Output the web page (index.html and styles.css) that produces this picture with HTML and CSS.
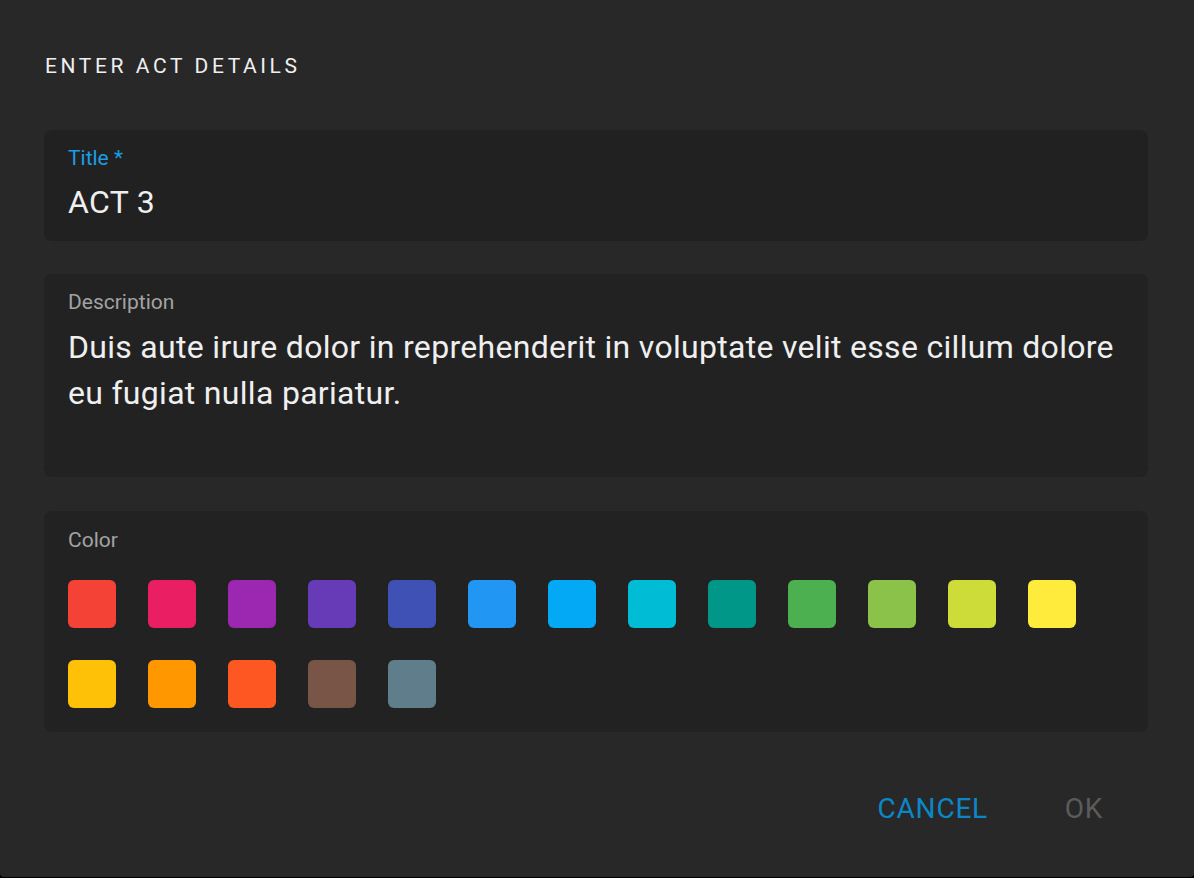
FILE: index.html
```html
<!DOCTYPE html>
<html lang="en">
<head>
<meta charset="utf-8">
<title>Enter act details</title>
<link rel="stylesheet" href="styles.css">
</head>
<body>
<div class="dialog">
  <h2 class="dialog-title">ENTER ACT DETAILS</h2>
  <div class="field field-focused">
    <label class="field-label label-active">Title *</label>
    <div class="field-value">ACT 3</div>
  </div>
  <div class="field field-description">
    <label class="field-label">Description</label>
    <div class="field-value field-multiline">Duis aute irure dolor in reprehenderit in voluptate velit esse cillum dolore eu fugiat nulla pariatur.</div>
  </div>
  <div class="field field-colors">
    <label class="field-label">Color</label>
    <div class="swatches">
      <span class="swatch" style="background:#f44336"></span>
      <span class="swatch" style="background:#e91e63"></span>
      <span class="swatch" style="background:#9c27b0"></span>
      <span class="swatch" style="background:#673ab7"></span>
      <span class="swatch" style="background:#3f51b5"></span>
      <span class="swatch" style="background:#2196f3"></span>
      <span class="swatch" style="background:#03a9f4"></span>
      <span class="swatch" style="background:#00bcd4"></span>
      <span class="swatch" style="background:#009688"></span>
      <span class="swatch" style="background:#4caf50"></span>
      <span class="swatch" style="background:#8bc34a"></span>
      <span class="swatch" style="background:#cddc39"></span>
      <span class="swatch" style="background:#ffeb3b"></span>
      <span class="swatch" style="background:#ffc107"></span>
      <span class="swatch" style="background:#ff9800"></span>
      <span class="swatch" style="background:#ff5722"></span>
      <span class="swatch" style="background:#795548"></span>
      <span class="swatch" style="background:#607d8b"></span>
    </div>
  </div>
  <div class="actions">
    <button class="btn btn-cancel">CANCEL</button>
    <button class="btn btn-ok">OK</button>
  </div>
</div>
</body>
</html>
```

FILE: styles.css
```css
html, body {
  margin: 0;
  padding: 0;
  background: #000;
}

body {
  font-family: Roboto, "Liberation Sans", sans-serif;
}

.dialog {
  box-sizing: border-box;
  width: 1194px;
  height: 877px;
  background: #282828;
  border-radius: 0 0 4px 4px;
  padding: 54px 46px 0 44px;
  display: flex;
  flex-direction: column;
}

.dialog-title {
  margin: 0 0 52px 1px;
  font-size: 21px;
  line-height: 24px;
  font-weight: 400;
  letter-spacing: 3.6px;
  color: #efefef;
}

.field {
  background: #222222;
  border-radius: 8px;
  padding: 16px 24px 16px 24px;
  margin-bottom: 33px;
  display: flex;
  flex-direction: column;
}

.field-focused {
  background: #212121;
}

.field-description {
  padding-bottom: 15px;
  margin-bottom: 34px;
}

.field-label {
  font-size: 21px;
  line-height: 24px;
  color: #a3a3a3;
}

.label-active {
  color: #1b9de2;
}

.field-value {
  margin-top: 9px;
  font-size: 32px;
  line-height: 46px;
  letter-spacing: 0.3px;
  color: #efefef;
}

.field-multiline {
  min-height: 138px;
  margin-top: 10px;
}

.field-colors {
  padding: 17px 24px 24px 24px;
  margin-bottom: 0;
}

.swatches {
  margin-top: 28px;
  display: flex;
  flex-wrap: wrap;
  gap: 32px;
}

.swatch {
  width: 48px;
  height: 48px;
  border-radius: 6px;
}

.actions {
  margin-top: 44px;
  padding-right: 8px;
  display: flex;
  justify-content: flex-end;
  gap: 26px;
}

.btn {
  font-family: Roboto, "Liberation Sans", sans-serif;
  background: none;
  border: none;
  padding: 8px 14px;
  min-width: 112px;
  font-size: 28px;
  line-height: 49px;
  letter-spacing: 0.8px;
  font-weight: 400;
  text-align: center;
}

.btn-cancel {
  color: #0b87c8;
}

.btn-ok {
  color: #5b5b5b;
}
```
